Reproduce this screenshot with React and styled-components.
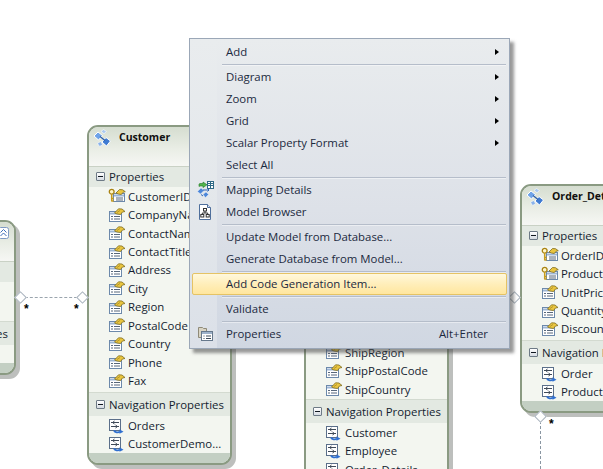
import React from 'react';
import styled, { createGlobalStyle } from 'styled-components';

const GlobalStyle = createGlobalStyle`
  html, body {
    margin: 0;
    padding: 0;
    background: #fff;
  }
  body {
    font-family: "Open Sans", "Noto Sans", "Liberation Sans", sans-serif;
    font-size: 11.4px;
    color: #141d30;
  }
`;

const Canvas = styled.div`
  position: relative;
  width: 603px;
  height: 469px;
  overflow: hidden;
  background: #fff;
`;

/* entity shapes sit on a free diagram canvas */
const Card = styled.div`
  position: absolute;
  left: ${p => p.$x}px;
  top: ${p => p.$y}px;
  width: 145px;
  box-sizing: border-box;
  border: 2px solid #8a9a82;
  border-radius: 11px;
  background: #f3f6f0;
  box-shadow: 4px 4px 0 #bdbfbd;
  overflow: hidden;
`;

const CardHead = styled.div`
  display: flex;
  align-items: flex-start;
  height: 39px;
  box-sizing: border-box;
  padding: 1px 5px 0 4px;
  background: linear-gradient(180deg, #d5ddd0 0%, #e9ede5 55%, #f6f7f4 100%);
`;

const EntityIconWrap = styled.span`
  flex: none;
  width: 26px;
  height: 20px;
`;

const CardTitle = styled.span`
  flex: 1;
  min-width: 0;
  font-weight: 700;
  font-size: 10.5px;
  line-height: 18px;
  color: #101010;
  white-space: nowrap;
  overflow: hidden;
  text-overflow: ellipsis;
`;

const Chevron = styled.span`
  flex: none;
  display: flex;
  margin-top: 4px;
  margin-left: 4px;
`;

const SectionHead = styled.div`
  display: flex;
  align-items: center;
  gap: 4px;
  height: ${p => p.$h}px;
  box-sizing: border-box;
  padding: 0 0 ${p => p.$lift || 0}px 7px;
  background: #e3e9e2;
  border-top: 1px solid ${p => (p.$first ? '#c9d1c5' : '#d3dad0')};
  white-space: nowrap;
`;

const Toggle = styled.span`
  flex: none;
  position: relative;
  width: 9px;
  height: 9px;
  box-sizing: border-box;
  border: 1px solid #6d7a86;
  border-radius: 1px;
  background: linear-gradient(180deg, #ffffff, #d5dbe2);

  &::after {
    content: '';
    position: absolute;
    left: 1px;
    right: 1px;
    top: 3px;
    height: 1px;
    background: #101820;
  }
`;

const Rows = styled.div`
  padding-bottom: ${p => p.$pad || 0}px;
`;

const Row = styled.div`
  display: flex;
  align-items: center;
  height: 18.45px;
  padding-left: 19px;
  white-space: nowrap;
`;

const RowIcon = styled.span`
  flex: none;
  display: flex;
  width: 20px;
`;

const CardFoot = styled.div`
  height: 10px;
  background: #c3cfc3;
`;

const Connector = styled.div`
  position: absolute;
  left: ${p => p.$x}px;
  top: ${p => p.$y}px;
  width: ${p => p.$w}px;
  height: ${p => p.$h}px;
  border-top: ${p => (p.$h === 0 ? '1.5px dashed #9aa4ad' : 'none')};
  border-left: ${p => (p.$w === 0 ? '1px dashed #8a96a2' : 'none')};
`;

const Diamond = styled.div`
  position: absolute;
  left: ${p => p.$x - 4}px;
  top: ${p => p.$y - 4}px;
  width: 7px;
  height: 7px;
  background: #fff;
  border: 1px solid #a7b1bc;
  transform: rotate(45deg);
`;

const Star = styled.div`
  position: absolute;
  left: ${p => p.$x}px;
  top: ${p => p.$y}px;
  font-family: "Liberation Sans", sans-serif;
  font-weight: 700;
  font-size: 12px;
  line-height: 12px;
  color: #000;
`;

const Menu = styled.div`
  position: absolute;
  left: 189px;
  top: 38px;
  width: 321px;
  height: 311px;
  box-sizing: border-box;
  padding: 2px;
  border: 1px solid #9ba7b7;
  background:
    linear-gradient(180deg, #e9ecee 0%, #e3e7eb 55%, #dbe0e8 100%) 0 0 / 27px 100% no-repeat,
    linear-gradient(180deg, #e9ecee 0%, #dde1e8 55%, #d0d7e2 100%);
  box-shadow: 4px 4px 3px rgba(70, 70, 70, 0.55);
`;

const Item = styled.div`
  display: flex;
  align-items: center;
  height: 22px;
  box-sizing: border-box;
  padding: 0 7px 1px 0;
  border: 1px solid ${p => (p.$active ? '#e5c365' : 'transparent')};
  border-radius: 2px;
  background: ${p => (p.$active ? 'linear-gradient(180deg, #fff8dc 0%, #ffefbd 45%, #ffe69e 100%)' : 'none')};
  color: #1b293e;
`;

const ItemIcon = styled.span`
  flex: none;
  display: flex;
  justify-content: center;
  width: 24px;
  margin-right: 9px;
`;

const ItemLabel = styled.span`
  flex: 1;
  white-space: nowrap;
`;

const Shortcut = styled.span`
  margin-right: 11px;
`;

const Arrow = styled.span`
  width: 0;
  height: 0;
  border-left: 4px solid #000;
  border-top: 3.5px solid transparent;
  border-bottom: 3.5px solid transparent;
`;

const Separator = styled.div`
  height: 1px;
  margin: 1px 1px 1px 30px;
  background: #b5bdca;
  box-shadow: 0 1px 0 rgba(255, 255, 255, 0.45);
`;

const PropertyGlyph = () => (
  <svg width="18" height="16" viewBox="0 0 18 16">
    <rect x="1.5" y="4.5" width="12" height="10" fill="#fff" stroke="#6c89ab" />
    <path d="M2 6.5h11" stroke="#9db6d6" strokeWidth="2" />
    <path d="M3 9.5h2M6 9.5h6M3 12h2M6 12h6" stroke="#57677b" />
    <path d="M6.5 6l4-4.2 3.5.2 3 2.5-2.5.5-2 2.5-3.5-.5z" fill="#e9c53f" stroke="#7f6c1e" strokeWidth="0.8" />
    <path d="M9 5.5l3-2" stroke="#a88c25" strokeWidth="0.8" />
  </svg>
);

const KeyGlyph = () => (
  <svg width="18" height="16" viewBox="0 0 18 16">
    <rect x="5.5" y="5.5" width="11" height="8" fill="#fff" stroke="#6c89ab" />
    <path d="M6 7.5h10" stroke="#9db6d6" strokeWidth="2" />
    <path d="M8 10h7M8 12h7" stroke="#57677b" />
    <path d="M8 5l3.5-3.5 3 .2 2.8 2-2.3.6-1.7 2.2-3-.5z" fill="#e9c53f" stroke="#7f6c1e" strokeWidth="0.8" />
    <circle cx="3.7" cy="3.7" r="2.4" fill="#fff6c8" stroke="#a98313" strokeWidth="1.3" />
    <path d="M3.7 6v7.5M3.7 10.5h2M3.7 13h2" stroke="#c79c1c" strokeWidth="1.5" />
  </svg>
);

const NavGlyph = () => (
  <svg width="17" height="17" viewBox="0 0 17 17">
    <rect x="1.5" y="2.5" width="11" height="11" fill="#fff" stroke="#5b6f8a" />
    <path d="M3 5.5h8M3 9.5h8" stroke="#3f4a58" />
    <path d="M6.5 4l-2 1.5 2 1.5M7.5 8l2 1.5-2 1.5" fill="none" stroke="#3f4a58" />
    <path d="M6 13.5c1 2 4 2.3 6 1.3" fill="none" stroke="#2f6fd0" strokeWidth="1.8" />
    <path d="M11.5 12.3l4 2.5-4 2z" fill="#2f6fd0" />
  </svg>
);

const EntityGlyph = () => (
  <svg width="19" height="20" viewBox="0 0 19 20">
    <path d="M1 8l4-4 4.5 3.5-4 4.5z" fill="#6fa3e8" stroke="#fff" />
    <path d="M8 3.5l2.5-2 3 2-2.5 2.2z" fill="#a9c9f0" stroke="#fff" strokeWidth="0.6" />
    <path d="M9 14l4-4.5 4.5 3.5-4 5z" fill="#3f7bd2" stroke="#fff" />
    <path d="M4.5 15.5l3-2 2.2 3-3 2z" fill="#8ab3ea" stroke="#fff" strokeWidth="0.6" />
    <path d="M7 8.5l5 4" stroke="#2c5da8" strokeWidth="1.2" />
  </svg>
);

const ChevronGlyph = () => (
  <svg width="11" height="12" viewBox="0 0 11 12">
    <rect x="0.5" y="0.5" width="10" height="11" rx="2" fill="#fff" stroke="#7f9ac4" />
    <path d="M2.5 5.5l3-3 3 3M2.5 9l3-3 3 3" fill="none" stroke="#3d6fb8" />
  </svg>
);

const MappingGlyph = () => (
  <svg width="17" height="17" viewBox="0 0 17 17">
    <rect x="10.5" y="0.5" width="6" height="7" fill="#fff" stroke="#2f6a86" />
    <path d="M11 2.5h5M11 4.5h5M13.5 1v6" stroke="#2f6a86" />
    <path d="M3 2.5h3V1l4 2.8-4 2.8V5H3l-1 .5V3z" fill="#52b54c" stroke="#24792a" strokeWidth="0.6" />
    <path d="M0.5 10.5l3.5-3.5 3 2.5-3.5 3.5z" fill="#4c86d8" stroke="#d8e6fa" strokeWidth="0.5" />
    <path d="M6 13.5l3-2.5 2.5 2.5-3 3z" fill="#4c86d8" stroke="#d8e6fa" strokeWidth="0.5" />
    <path d="M6 9h6M12 9l-1.5-1.5M12 9l-1.5 1.5M4 13.5l2 1.5" fill="none" stroke="#2f65b5" />
  </svg>
);

const BrowserGlyph = () => (
  <svg width="14" height="16" viewBox="0 0 14 16">
    <path d="M1.5.5h8l3 3v12h-11z" fill="#fff" stroke="#4f6f9c" />
    <path d="M9.5.5v3h3" fill="#dbe5f2" stroke="#4f6f9c" />
    <rect x="5.5" y="4.5" width="3" height="2.5" fill="#fff" stroke="#333" />
    <rect x="2.8" y="10.5" width="3" height="2.5" fill="#fff" stroke="#333" />
    <rect x="8.2" y="10.5" width="3" height="2.5" fill="#fff" stroke="#333" />
    <path d="M7 7v2M4.3 10.5V9h5.4v1.5" fill="none" stroke="#333" />
  </svg>
);

const PropertiesGlyph = () => (
  <svg width="17" height="16" viewBox="0 0 17 16">
    <path d="M1.5 1.5h4l1 1h3v9h-8z" fill="#d9d4c4" stroke="#8f8a78" />
    <rect x="4.5" y="5.5" width="11" height="9" fill="#fff" stroke="#66788c" />
    <path d="M5 7h10" stroke="#9db1c9" strokeWidth="2" />
    <path d="M6.5 10h1M9 10h5M6.5 12.5h1M9 12.5h5" stroke="#3f4a58" />
  </svg>
);

const propRow = (name, key) => ({ name, key });

const entities = [
  {
    title: 'CustomerDemographic',
    x: -129,
    y: 220,
    pad: 2,
    props: [propRow('CustomerType', true), propRow('CustomerDesc')],
    navs: ['Customers'],
  },
  {
    // most of this one is behind the menu, only its tail shows
    title: 'Order',
    x: 304,
    y: 281,
    pad: 1,
    props: [propRow('ShipRegion'), propRow('ShipPostalCode'), propRow('ShipCountry')],
    navs: ['Customer', 'Employee', 'Order_Details'],
  },
  {
    title: 'Customer',
    x: 87,
    y: 125,
    pad: 2,
    props: [
      propRow('CustomerID', true), propRow('CompanyName'), propRow('ContactName'), propRow('ContactTitle'),
      propRow('Address'), propRow('City'), propRow('Region'), propRow('PostalCode'),
      propRow('Country'), propRow('Phone'), propRow('Fax'),
    ],
    navs: ['Orders', 'CustomerDemo...'],
  },
  {
    title: 'Order_Details',
    x: 520,
    y: 184,
    pad: 2,
    props: [
      propRow('OrderID', true), propRow('ProductID', true), propRow('UnitPrice'),
      propRow('Quantity'), propRow('Discount'),
    ],
    navs: ['Order', 'Product'],
  },
];

const Entity = ({ title, x, y, pad, props, navs }) => (
  <Card $x={x} $y={y}>
    <CardHead>
      <EntityIconWrap><EntityGlyph /></EntityIconWrap>
      <CardTitle>{title}</CardTitle>
      <Chevron><ChevronGlyph /></Chevron>
    </CardHead>
    <SectionHead $h={21} $lift={2} $first><Toggle />Properties</SectionHead>
    <Rows $pad={pad}>
      {props.map(p => (
        <Row key={p.name}>
          <RowIcon>{p.key ? <KeyGlyph /> : <PropertyGlyph />}</RowIcon>
          {p.name}
        </Row>
      ))}
    </Rows>
    <SectionHead $h={24}><Toggle />Navigation Properties</SectionHead>
    <Rows>
      {navs.map(n => (
        <Row key={n}>
          <RowIcon><NavGlyph /></RowIcon>
          {n}
        </Row>
      ))}
    </Rows>
    <CardFoot />
  </Card>
);

const menuGroups = [
  [{ label: 'Add', sub: true }],
  [
    { label: 'Diagram', sub: true },
    { label: 'Zoom', sub: true },
    { label: 'Grid', sub: true },
    { label: 'Scalar Property Format', sub: true },
    { label: 'Select All' },
  ],
  [
    { label: 'Mapping Details', icon: <MappingGlyph /> },
    { label: 'Model Browser', icon: <BrowserGlyph /> },
  ],
  [{ label: 'Update Model from Database...' }, { label: 'Generate Database from Model...' }],
  [{ label: 'Add Code Generation Item...', active: true }],
  [{ label: 'Validate' }],
  [{ label: 'Properties', icon: <PropertiesGlyph />, shortcut: 'Alt+Enter' }],
];

const App = () => (
  <Canvas>
    <GlobalStyle />
    <Connector $x={20} $y={297} $w={62} $h={0} />
    <Connector $x={540} $y={416} $w={0} $h={53} />
    {entities.map(e => <Entity key={e.title} {...e} />)}
    <Diamond $x={20} $y={297} />
    <Diamond $x={82} $y={297} />
    <Diamond $x={514} $y={297} />
    <Diamond $x={540} $y={416} />
    <Star $x={24} $y={303}>*</Star>
    <Star $x={74} $y={303}>*</Star>
    <Star $x={549} $y={418}>*</Star>
    <Menu>
      {menuGroups.map((group, i) => (
        <React.Fragment key={i}>
          {i > 0 && <Separator />}
          {group.map(item => (
            <Item key={item.label} $active={item.active}>
              <ItemIcon>{item.icon}</ItemIcon>
              <ItemLabel>{item.label}</ItemLabel>
              {item.shortcut && <Shortcut>{item.shortcut}</Shortcut>}
              {item.sub && <Arrow />}
            </Item>
          ))}
        </React.Fragment>
      ))}
    </Menu>
  </Canvas>
);

export default App;
